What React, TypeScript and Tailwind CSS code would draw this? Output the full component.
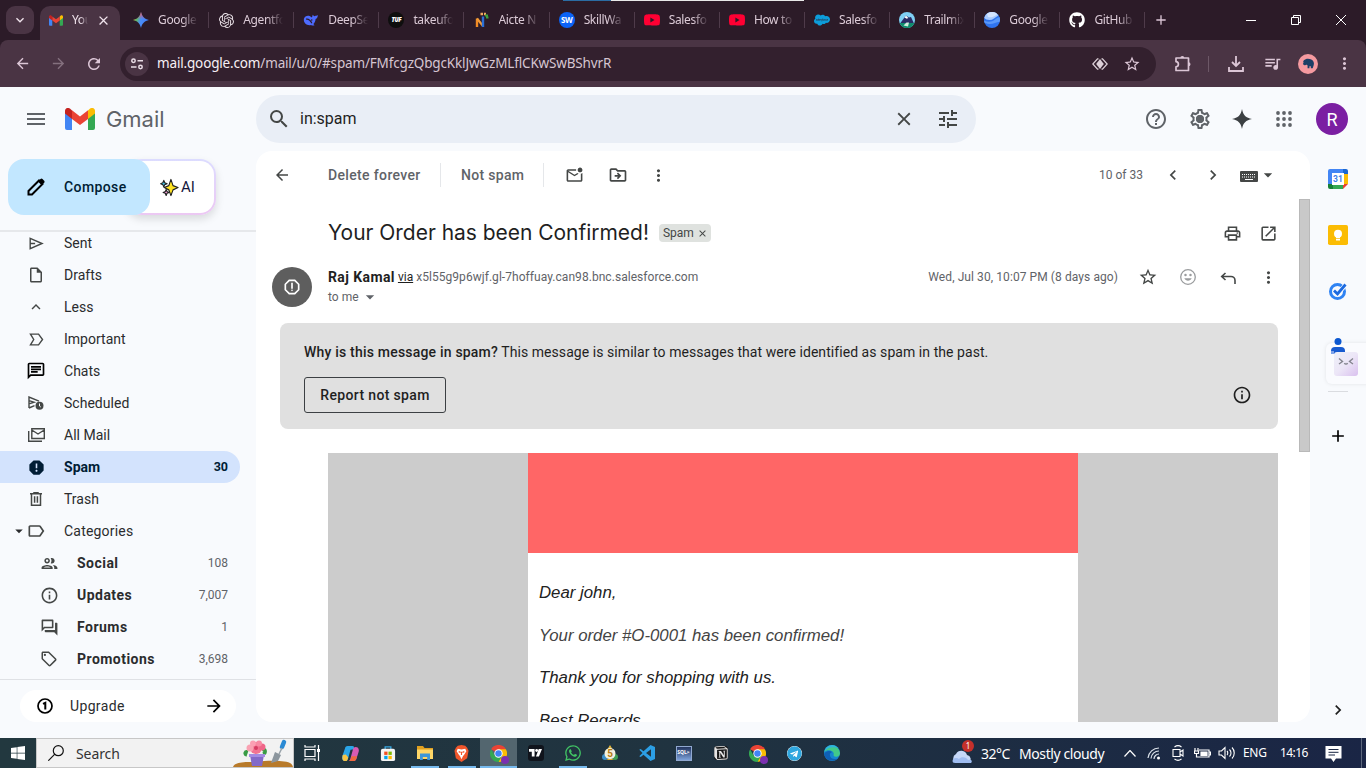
import type { ReactNode } from "react";
import {
  MdSearch, MdClose, MdTune, MdHelpOutline, MdApps, MdArrowBack, MdArrowForward, MdRefresh,
  MdOutlineMarkEmailUnread, MdOutlineDriveFileMove, MdMoreVert, MdOutlinePrint, MdOpenInNew, MdStarBorder,
  MdArrowDropDown, MdOutlineReport, MdReport, MdLabelOutline,
  MdOutlineInsertDriveFile, MdOutlinePeople, MdInfoOutline, MdOutlineForum, MdOutlineChat, MdOutlineSell,
  MdKeyboardArrowDown, MdKeyboardArrowUp, MdChevronLeft, MdChevronRight, MdAdd, MdOutlineSettings,
  MdOutlineQueueMusic,
} from "react-icons/md";
import { FaGithub, FaSalesforce, FaWhatsapp, FaWindows, FaTelegram } from "react-icons/fa";
import { SiOpenai, SiYoutube, SiNotion } from "react-icons/si";

const ui = "font-['Noto_Sans',sans-serif]";

function GmailLogo({ className }: { className: string }) {
  return (
    <svg viewBox="0 0 30 22" className={className}>
      <path d="M0 3.5v16.500a2 2 0 0 0 2 2h5V9z" fill="#4285f4" />
      <path d="M30 3.500v16.500a2 2 0 0 1-2 2h-5V9z" fill="#34a853" />
      <path d="M23 2.500V11l7-5.500V3c0-2.800-3-4-5.200-2.200z" fill="#fbbc04" />
      <path d="M7 11V2.200L15 8.500l8-6.300V11l-8 6z" fill="#ea4335" />
      <path d="M0 3v2.500L7 11V2.500L5.200.8C3-1 0 .200 0 3z" fill="#c5221f" />
    </svg>
  );
}

function Gemini() {
  return (
    <svg viewBox="0 0 16 16" className="size-4">
      <defs>
        <linearGradient id="gem" x1="0" y1="0.300" x2="1" y2="0.600">
          <stop offset="0" stopColor="#f6c945" />
          <stop offset="0.250" stopColor="#5fb96a" />
          <stop offset="0.500" stopColor="#4a8df8" />
          <stop offset="1" stopColor="#3f7df5" />
        </linearGradient>
        <linearGradient id="gem2" x1="0" y1="0" x2="0" y2="1">
          <stop offset="0" stopColor="#f0506a" />
          <stop offset="0.450" stopColor="#f0506a" stopOpacity="0" />
        </linearGradient>
      </defs>
      <path d="M8 0C9 4.500 11.500 7 16 8 11.500 9 9 11.500 8 16 7 11.500 4.500 9 0 8 4.500 7 7 4.500 8 0z" fill="url(#gem)" />
      <path d="M8 0C9 4.500 11.500 7 16 8 11.500 9 9 11.500 8 16 7 11.500 4.500 9 0 8 4.500 7 7 4.500 8 0z" fill="url(#gem2)" />
    </svg>
  );
}

function Whale() {
  return (
    <svg viewBox="0 0 18 16" className="h-[15px] w-[17px]">
      <path d="M1 6c1-3 4-4 6.500-3 1 .4 1.500 1 2.500 1.600.6-.8.4-2 1-3 .7 1 1.200 1.500 2 1.600.9-.2 2-.4 3.500-1.400.3 2.400-.6 3.900-2.300 4.500-.3 2.700-1.200 4.500-2.600 5.700l1.400 1.400c-1.700.4-3 .2-4-.4C5 14 .3 11.500 1 6z" fill="#4d6bfe" />
      <path d="M3.500 6.500c2.500-.6 5 1.500 6.500 4.700" stroke="#2c1b28" strokeWidth="1.300" fill="none" />
      <circle cx="9.800" cy="7.500" r="0.900" fill="#2c1b28" />
    </svg>
  );
}

function Aicte() {
  return (
    <svg viewBox="0 0 16 16" className="size-4">
      <path d="M3 15V6.500" stroke="#f08a24" strokeWidth="2.400" />
      <path d="M3 6.500 9 14" stroke="#f29b38" strokeWidth="2.200" fill="none" />
      <path d="M9 4.500V15" stroke="#2b6fd6" strokeWidth="2.400" />
      <path d="M6.500 2h2.500M10 2h2" stroke="#f0a860" strokeWidth="2.600" />
      <path d="M11 3.500h3M12 5.500h2.500" stroke="#3da13d" strokeWidth="1.800" />
    </svg>
  );
}

function Trail() {
  return (
    <svg viewBox="0 0 16 16" className="size-4">
      <circle cx="8" cy="8" r="8" fill="#7fd0f5" />
      <path d="M1 11.500 7 3.500l3 2L12 5l3 6.500z" fill="#2a2c66" />
      <path d="M5.500 5.500 7 3.500l2.300 2.500-1.500.8z" fill="#fff" />
      <path d="M.6 11h14.800A8 8 0 0 1 .6 11z" fill="#0f8c6d" />
      <path d="M4.500 13.500l3-3h2.500l-1 4z" fill="#cfeedd" />
    </svg>
  );
}

function Earth() {
  return (
    <svg viewBox="0 0 16 16" className="size-4">
      <circle cx="8" cy="8" r="8" fill="#2f74ee" />
      <path d="M.2 6A8 8 0 0 1 14.500 3.400C11 5.500 9 8 5.500 8 3 8 1.500 7 .2 6z" fill="#a9cbff" />
      <path d="M3 1.800A8 8 0 0 1 13.500 2.200C10 4.500 7 6 4 5z" fill="#d4e5ff" />
      <path d="M0 8.500c4 2 8 1.500 11-1 2-1.500 3-2 4.500-2.500.7 2 .6 3.500.2 4.800C12 10 9 12.500 5 12 3 11.700 1 11 .4 10.500z" fill="#5b99f8" />
    </svg>
  );
}

const tabs: { label: string; icon: ReactNode }[] = [
  { label: "Google", icon: <Gemini /> },
  { label: "Agentfo", icon: <SiOpenai className="size-[15px] text-[#e8e0e6]" /> },
  { label: "DeepSe", icon: <Whale /> },
  {
    label: "takeufo",
    icon: <span className="flex size-4 items-center justify-center rounded-full bg-[#0e0e0e] text-[6px] font-black italic text-white">TUF</span>,
  },
  { label: "Aicte N", icon: <Aicte /> },
  {
    label: "SkillWa",
    icon: <span className="flex size-4 items-center justify-center rounded-full bg-[#0b63f6] text-[8px] font-bold text-white">SW</span>,
  },
  { label: "Salesfo", icon: <SiYoutube className="size-4 text-[#ff0033]" /> },
  { label: "How to", icon: <SiYoutube className="size-4 text-[#ff0033]" /> },
  { label: "Salesfo", icon: <FaSalesforce className="size-4 text-[#0d9dda]" /> },
  { label: "Trailmix", icon: <Trail /> },
  { label: "Google", icon: <Earth /> },
  { label: "GitHub", icon: <FaGithub className="size-4 text-white" /> },
];

function TabStrip() {
  return (
    <div className={`relative flex h-10 shrink-0 bg-[#2c1b28] text-[12px] tracking-[-0.350px] text-[#dccbd7] ${ui}`}>
      <div className="absolute top-0 left-[563px] h-px w-[48px] bg-[#2b6ca3]" />
      <div className="absolute top-0 left-[611px] h-px w-[193px] bg-[#e9e9e9]" />
      <div className="mt-1.5 ml-1.5 flex size-7 items-center justify-center rounded-[9px] bg-[#4a3444] text-[#f0e3ec]">
        <MdKeyboardArrowDown className="size-4" />
      </div>
      <div className="mt-1.5 ml-1.5 flex w-20 items-center rounded-t-[10px] bg-[#4a3444] pb-1.5 pl-[9px]">
        <GmailLogo className="h-[11px] w-[14px]" />
        <span className="ml-[9px] w-4 overflow-hidden whitespace-nowrap text-[#f0e3ec] [mask-image:linear-gradient(90deg,#000_50%,transparent)]">You</span>
        <MdClose className="ml-2 size-[15px] text-[#f0e3ec]" />
      </div>
      <div className="flex pl-1">
        {tabs.map((t, i) => (
          <div key={i} className="flex h-10 w-[85.140px] items-center pl-[9px]">
            <span className="flex w-4 shrink-0 justify-center">{t.icon}</span>
            <span className="ml-[9px] w-[40px] shrink-0 overflow-hidden whitespace-nowrap [mask-image:linear-gradient(90deg,#000_60%,transparent)]">{t.label}</span>
            <span className="ml-[10px] h-4 w-px bg-[#4f3b4a]" />
          </div>
        ))}
      </div>
      <MdAdd className="mt-3 ml-[7px] size-4 text-[#dcc6d6]" />
      <div className="flex-1" />
      <div className="flex w-[138px] items-center justify-around pr-0.5 text-white">
        <svg viewBox="0 0 10 10" className="size-[10px]"><path d="M0 5.500h10" stroke="currentColor" /></svg>
        <svg viewBox="0 0 10 10" className="size-[10px]" fill="none" stroke="currentColor"><path d="M.5 2.500h7v7h-7zM2.500 2.500v-2h7v7h-2" /></svg>
        <svg viewBox="0 0 10 10" className="size-[10px]" stroke="currentColor"><path d="M0 0l10 10M10 0L0 10" /></svg>
      </div>
    </div>
  );
}

function Slot({ w, children }: { w: string; children: ReactNode }) {
  return <div className={`flex shrink-0 items-center justify-center ${w}`}>{children}</div>;
}

function AddressBar() {
  return (
    <div className="flex h-[47px] shrink-0 items-center rounded-t-lg bg-[#4a3444] text-[#dcc6d6]">
      <div className="w-1" />
      <Slot w="w-9"><MdArrowBack className="size-[17px]" /></Slot>
      <Slot w="w-9"><MdArrowForward className="size-[17px] text-[#84707e]" /></Slot>
      <Slot w="w-9"><MdRefresh className="size-[18px]" /></Slot>
      <div className="ml-2 flex h-[34px] w-[1036px] items-center rounded-full bg-[#33202e] pl-[5px]">
        <span className="flex size-6 items-center justify-center rounded-full bg-[#4a3444]">
          <svg viewBox="0 0 14 14" className="size-[14px]" fill="none" stroke="#eadde6" strokeWidth="1.500">
            <circle cx="3.500" cy="3.800" r="1.700" /><path d="M7.500 3.800H13M1 10h5.500" /><circle cx="10.500" cy="10" r="1.700" />
          </svg>
        </span>
        <span className={`ml-2 text-[13.500px] tracking-[-0.160px] whitespace-nowrap text-[#d6c5d1] ${ui}`}>
          <span className="text-[#f7eff5]">mail.google.com</span>/mail/u/0/#spam/FMfcgzQbgcKklJwGzMLflCKwSwBShvrR
        </span>
        <div className="flex-1" />
        <Slot w="w-8">
          <svg viewBox="0 0 16 16" className="size-4" fill="none" stroke="#dcd0d8" strokeWidth="1.300">
            <path d="M6.500 2.800h-1L.8 8l4.700 5.200h1M9.500 2.800h1L15.200 8l-4.700 5.200h-1" /><path d="M8 3 11.800 8 8 13 4.200 8z" fill="#dcd0d8" stroke="none" />
          </svg>
        </Slot>
        <Slot w="w-8"><MdStarBorder className="size-[18px]" /></Slot>
        <div className="w-2" />
      </div>
      <div className="w-[9px]" />
      <Slot w="w-9">
        <svg viewBox="0 0 18 18" className="size-[18px]" fill="none" stroke="currentColor" strokeWidth="1.700">
          <path d="M2 3h12.500v12.500H2v-3.700c3.200-.3 3.200-4.800 0-5.100z" strokeLinejoin="round" />
          <path d="M6.300 3a2 2 0 0 1 4 0zM14.500 7.200a2 2 0 0 1 0 4z" fill="currentColor" stroke="none" />
        </svg>
      </Slot>
      <div className="ml-[7px] h-4 w-px bg-[#6d5867]" />
      <div className="w-[9px]" />
      <Slot w="w-9">
        <svg viewBox="0 0 16 16" className="size-4" fill="none" stroke="currentColor" strokeWidth="1.800"><path d="M8 0v9.500M4 6l4 4 4-4M1 11v4h14v-4" /></svg>
      </Slot>
      <Slot w="w-9"><MdOutlineQueueMusic className="size-[19px]" /></Slot>
      <Slot w="w-9">
        <span className="flex size-5 items-center justify-center rounded-full bg-[#f59aa0]">
          <svg viewBox="0 0 14 12" className="w-[13px]"><path d="M2 2.500C4 0 8 .5 10 1.500c2.500 1 3.500 4 2.500 6.500l-1 3H9.500V9H8v2H6V8C5.500 7 5 7 4 7.500 2 8.500 1 7 1 5.500c1.500.5 1.500-.5 0-1z" fill="#1d3f66" /></svg>
        </span>
      </Slot>
      <Slot w="w-9"><MdMoreVert className="size-[19px]" /></Slot>
    </div>
  );
}

function Header() {
  return (
    <div className="flex h-16 shrink-0 items-center text-[#444746]">
      <Slot w="w-[72px]">
        <svg viewBox="0 0 18 12" className="h-3 w-[18px]"><path d="M0 1h18M0 6h18M0 11h18" stroke="#5f6368" strokeWidth="1.800" /></svg>
      </Slot>
      <GmailLogo className="-ml-[7px] h-[22px] w-[30px]" />
      <span className="ml-[11px] w-[150px] font-['Inter',sans-serif] text-[22px] leading-6 tracking-[-0.050px] text-[#5f6368]">Gmail</span>
      <div className="-mt-[1px] flex h-12 w-[720px] items-center rounded-full bg-[#e9eef6]">
        <Slot w="ml-[3px] mr-px w-10"><MdSearch className="size-6" /></Slot>
        <span className="flex-1 text-[16px] text-[#1f1f1f]">in:spam</span>
        <Slot w="w-11"><MdClose className="size-[22px]" /></Slot>
        <Slot w="w-11"><MdTune className="size-6" /></Slot>
        <div className="w-1.5" />
      </div>
      <div className="w-[158px]" />
      <Slot w="w-11"><MdHelpOutline className="size-6 text-[#5f6368]" /></Slot>
      <Slot w="w-11"><span className="relative flex"><MdOutlineSettings className="size-6 text-[#5f6368]" /><span className="absolute top-[8px] left-[8px] size-2 rounded-full bg-[#5f6368]" /></span></Slot>
      <Slot w="w-10">
        <svg viewBox="0 0 20 20" className="size-5"><path d="M10 0c1 6 4 9 10 10-6 1-9 4-10 10-1-6-4-9-10-10 6-1 9-4 10-10z" fill="#3c4043" /></svg>
      </Slot>
      <Slot w="w-11">
        <svg viewBox="0 0 16 16" className="size-4" fill="#5f6368">
          {[2, 8, 14].map((y) => [2, 8, 14].map((x) => <circle key={`${x}-${y}`} cx={x} cy={y} r="1.900" />))}
        </svg>
      </Slot>
      <Slot w="ml-[10px] w-8"><span className="flex size-8 items-center justify-center rounded-full bg-[#7b1fa2] text-[18px] text-white">R</span></Slot>
    </div>
  );
}

function Sent() {
  return (
    <svg viewBox="0 0 16 14" className="h-[13px] w-[15px]" fill="none" stroke="currentColor" strokeWidth="1.500">
      <path d="M1.200 1.500 14 7 1.200 12.500zM1.500 7h5" />
    </svg>
  );
}

function Important() {
  return (
    <svg viewBox="0 0 16 14" className="h-[13px] w-[15px]" fill="none" stroke="currentColor" strokeWidth="1.500">
      <path d="M1.500 1.200h8.700L14.500 7l-4.300 5.800H1.500L5 7z" />
    </svg>
  );
}

function Trash() {
  return (
    <svg viewBox="0 0 12 14" className="h-[14px] w-3" fill="none" stroke="currentColor" strokeWidth="1.500">
      <path d="M0 1.700h12M4 1V.4h4V1M1.500 2v11.200h9V2M4.600 4.200v6.600M7.400 4.200v6.600" />
    </svg>
  );
}

function AllMail() {
  return (
    <svg viewBox="0 0 17 14" className="h-[14px] w-[17px]" fill="none" stroke="currentColor" strokeWidth="1.400">
      <path d="M3.800.7h12.500v9.800H3.800zM3.800 2l6.200 4 6.200-4M.7 3v10.300h13.300" />
    </svg>
  );
}

function Scheduled() {
  return (
    <svg viewBox="0 0 16 14" className="h-[14px] w-4">
      <path d="M1 12V1l10 4.200M1 12l5.500-2.300M1 4.700l5 1.500-5 1.600" stroke="currentColor" strokeWidth="1.400" fill="none" />
      <circle cx="11.500" cy="9.800" r="4" fill="currentColor" /><path d="M11.500 7.500v2.500l1.300 1" stroke="#f8fafd" fill="none" />
    </svg>
  );
}

const folders: { name: string; icon: ReactNode }[] = [
  { name: "Sent", icon: <Sent /> },
  { name: "Drafts", icon: <MdOutlineInsertDriveFile className="size-[18px]" /> },
  { name: "Less", icon: <MdKeyboardArrowUp className="size-[18px]" /> },
  { name: "Important", icon: <Important /> },
  { name: "Chats", icon: <MdOutlineChat className="size-5 text-black" /> },
  { name: "Scheduled", icon: <Scheduled /> },
  { name: "All Mail", icon: <AllMail /> },
  { name: "Spam", icon: <MdReport className="size-[19px] text-[#001d35]" /> },
  { name: "Trash", icon: <Trash /> },
];

const categories: { name: string; count: string; icon: ReactNode }[] = [
  { name: "Social", count: "108", icon: <MdOutlinePeople className="size-[19px]" /> },
  { name: "Updates", count: "7,007", icon: <MdInfoOutline className="size-[19px]" /> },
  { name: "Forums", count: "1", icon: <MdOutlineForum className="size-[19px]" /> },
  { name: "Promotions", count: "3,698", icon: <MdOutlineSell className="size-[18px]" /> },
];

function Sparkles() {
  return (
    <svg viewBox="0 0 20 20" className="size-[19px]" stroke="#222" strokeWidth="1.200" strokeLinejoin="round">
      <path d="M11.500 1.500 13.700 8l5.300 2-5.300 2.500-2.200 6-2.200-6L4.500 10l4.800-2z" fill="#ffe322" />
      <path d="M4 2.500 5 5l2.500 1L5 7 4 9.500 3 7 .7 6 3 5z" fill="#3fc5ee" />
      <path d="M6.500 12l.9 2.300 2.300.9-2.300.9-.9 2.300-.9-2.300-2.300-.9 2.300-.9z" fill="#f59bd8" />
    </svg>
  );
}

function Sidebar() {
  return (
    <div className="flex w-64 shrink-0 flex-col text-[14px] text-[#2b2c2e]">
      <div className="flex h-[79px] shrink-0 pt-2 pl-2">
        <div className="z-10 flex h-14 w-[142px] items-center rounded-2xl bg-[#c2e7ff] text-[#001d35]">
          <Slot w="w-14">
            <svg viewBox="0 0 20 20" className="size-5"><path d="M2.500 14 13 3.500l3.500 3.500L6 17.500H2.500z" fill="none" stroke="#000" strokeWidth="2" /><path d="m12 4.500 2.500-2.500a1.500 1.500 0 0 1 2 0l1.700 1.700a1.500 1.500 0 0 1 0 2L15.500 8z" fill="#000" /></svg>
          </Slot>
          <span className="font-medium tracking-[0.400px]">Compose</span>
        </div>
        <div className="-ml-6 h-14 w-[90px] rounded-2xl bg-linear-to-b from-[#dcdcff] to-[#ecc8f3] p-0.5 shadow-[0_4px_8px_rgba(0,0,0,0.130)]">
          <div className="flex h-full items-center rounded-[14px] bg-white pl-[32px]">
            <Sparkles />
            <span className="ml-0.5 text-[15px] text-[#14163c]">AI</span>
          </div>
        </div>
      </div>
      <div className="h-[2px] shrink-0 bg-[#e6e8eb]" />
      <div className="h-[447px] shrink-0 overflow-hidden">
        <div className="-mt-[5px]">
          {folders.map((f) => (
            <div key={f.name} className={`flex h-8 w-60 items-center rounded-r-full ${f.name === "Spam" ? "bg-[#d3e3fd] font-bold text-[#001d35]" : ""}`}>
              <Slot w="ml-5 w-8"><span className="text-[#444746]">{f.icon}</span></Slot>
              <span className="ml-3 flex-1 tracking-[0.020px]">{f.name}</span>
              {f.name === "Spam" && <span className="mr-3 text-[12.500px]">30</span>}
            </div>
          ))}
          <div className="flex h-8 items-center">
            <MdArrowDropDown className="ml-[10px] size-[18px]" />
            <MdLabelOutline className="-ml-[2px] size-5 text-[#444746]" />
            <span className="ml-[18px] tracking-[0.200px]">Categories</span>
          </div>
          {categories.map((c) => (
            <div key={c.name} className="flex h-8 w-[228px] items-center">
              <Slot w="ml-[33px] w-8"><span className="text-[#444746]">{c.icon}</span></Slot>
              <span className="ml-3 flex-1 font-bold tracking-[0.470px]">{c.name}</span>
              <span className="text-[12px] text-[#5f6368]">{c.count}</span>
            </div>
          ))}
        </div>
      </div>
      <div className="h-px shrink-0 bg-[#dfe1e5]" />
      <div className="mt-[10px] ml-5 flex h-8 w-[216px] items-center rounded-full bg-white">
        <svg viewBox="0 0 16 16" className="ml-[17px] size-4" fill="none" stroke="#000"><circle cx="8" cy="8" r="7" strokeWidth="1.700" /><path d="M6 5.800 8.300 4.800V11.500" strokeWidth="2" /></svg>
        <span className="ml-[17px] flex-1 tracking-[0.350px]">Upgrade</span>
        <MdArrowForward className="mr-[12px] size-5 text-black" />
      </div>
    </div>
  );
}

function KeyboardIcon() {
  return (
    <svg viewBox="0 0 18 11" className="mt-0.5 h-[11px] w-[18px]">
      <rect width="18" height="11" rx="1" fill="#444746" />
      <path d="M2 3.500h14M2 6h14" stroke="#fff" strokeWidth="1" strokeDasharray="1 1" />
      <path d="M5 8.500h8" stroke="#fff" />
    </svg>
  );
}

function Mail() {
  return (
    <div className="relative flex h-[571px] w-[1054px] shrink-0 flex-col overflow-hidden rounded-2xl bg-white text-[14px] text-[#1f1f1f]">
      <div className="absolute top-12 right-0 h-[253px] w-[11px] border border-[#b9b9b9] bg-[#c9c9c9]" />
      <div className="flex h-12 shrink-0 items-center text-[#444746]">
        <Slot w="w-[52px]"><MdArrowBack className="size-[18px]" /></Slot>
        <div className="w-5" />
        <span className="w-[112px] font-medium tracking-[0.350px] text-[#5f6368]">Delete forever</span>
        <div className="h-6 w-px bg-[#e5e7ea]" />
        <span className="w-[102px] pl-5 font-medium tracking-[0.300px] text-[#5f6368]">Not spam</span>
        <div className="h-6 w-px bg-[#e5e7ea]" />
        <Slot w="ml-[8px] w-11"><MdOutlineMarkEmailUnread className="size-[19px]" /></Slot>
        <Slot w="w-11"><MdOutlineDriveFileMove className="size-[20px]" /></Slot>
        <Slot w="w-9"><MdMoreVert className="size-[19px]" /></Slot>
        <div className="flex-1" />
        <span className="text-[12px] text-[#5f6368]">10 of 33</span>
        <Slot w="ml-[10px] w-10"><MdChevronLeft className="size-5" /></Slot>
        <Slot w="w-10"><MdChevronRight className="size-5" /></Slot>
        <div className="ml-[7px]"><KeyboardIcon /></div>
        <MdArrowDropDown className="size-5" />
        <div className="w-8" />
      </div>
      <div className="flex h-[68px] shrink-0 items-center pl-[72px] text-[#444746]">
        <span className="font-['Inter',sans-serif] text-[21px] tracking-[-0.030px] whitespace-nowrap text-[#1f1f1f]">Your Order has been Confirmed!</span>
        <span className="ml-[10px] flex h-[18px] w-[52px] items-center rounded bg-[#dfe2df] pl-1 text-[12px]">Spam<MdClose className="ml-[3px] size-[11px]" /></span>
        <div className="flex-1" />
        <Slot w="w-9"><MdOutlinePrint className="size-[19px]" /></Slot>
        <Slot w="w-9"><MdOpenInNew className="size-[19px]" /></Slot>
        <div className="w-6" />
      </div>
      <div className="flex h-14 shrink-0 pl-4">
        <span className="flex size-10 items-center justify-center rounded-full bg-[#5e5e5e] text-white"><MdOutlineReport className="size-5" /></span>
        <div className="ml-4 flex-1">
          <div className="flex h-5 items-center">
            <span className="font-bold tracking-[0.400px]">Raj Kamal</span>
            <span className="ml-[3px] text-[12px] underline">via</span>
            <span className="ml-[3px] text-[12px] tracking-[0.050px] text-[#5f6368]">x5l55g9p6wjf.gl-7hoffuay.can98.bnc.salesforce.com</span>
          </div>
          <div className="flex h-5 items-center text-[12px] text-[#5f6368]">to me<MdArrowDropDown className="ml-[1px] size-5" /></div>
        </div>
        <div className="flex h-5 items-center text-[#444746]">
          <span className="mr-3 text-[12px] tracking-[0.080px] text-[#5f6368]">Wed, Jul 30, 10:07 PM (8 days ago)</span>
          <Slot w="w-9"><MdStarBorder className="size-5" /></Slot>
          <div className="w-1" />
          <Slot w="w-9">
            <svg viewBox="0 0 16 16" className="size-4" fill="none" stroke="#9a9c9e" strokeWidth="1.300"><circle cx="8" cy="8" r="7.300" /><path d="M5.500 10h5c-1 1.500-4 1.500-5 0z" fill="#9a9c9e" /><circle cx="5.500" cy="6" r=".6" fill="#9a9c9e" /><circle cx="10.500" cy="6" r=".6" fill="#9a9c9e" /></svg>
          </Slot>
          <div className="w-1" />
          <Slot w="w-9">
            <svg viewBox="0 0 16 12" className="mt-0.5 h-3 w-4" fill="none" stroke="currentColor" strokeWidth="1.600"><path d="M5.500 1 1.700 4.500 5.500 8M2 4.500h9a4 4 0 0 1 4 4V12" /></svg>
          </Slot>
          <div className="w-1" />
          <Slot w="w-9"><MdMoreVert className="size-[19px]" /></Slot>
          <div className="w-6" />
        </div>
      </div>
      <div className="ml-6 flex h-[106px] w-[998px] shrink-0 flex-col rounded-lg bg-[#e0e0e0] pt-5 pl-6">
        <div className="h-[18px] text-[14px] leading-[18px] tracking-[0.060px]"><span className="font-medium tracking-[0.200px]">Why is this message in spam?</span> This message is similar to messages that were identified as spam in the past.</div>
        <div className="mt-4 flex items-center">
          <span className="flex h-9 w-[142px] items-center justify-center rounded-[3px] border border-[#3c4043] font-medium tracking-[0.350px]">Report not spam</span>
          <MdInfoOutline className="ml-auto mr-[26px] size-5" />
        </div>
      </div>
      <div className="mt-6 ml-[72px] flex h-[269px] w-[950px] shrink-0 justify-center bg-[#cccccc]">
        <div className="w-[550px] overflow-hidden bg-white">
          <div className="h-[100px] bg-[#ff6666]" />
          <div className="pt-[29px] pl-[11px] font-['Liberation_Sans',sans-serif] text-[16.800px] leading-[21px] whitespace-nowrap italic text-[#222]">
            <p>Dear john,</p>
            <p className="mt-[22px] text-[#444]">Your order #O-0001 has been confirmed!</p>
            <p className="mt-[21px]">Thank you for shopping with us.</p>
            <p className="mt-[22px]">Best Regards,</p>
          </div>
        </div>
      </div>
    </div>
  );
}

function SidePanel() {
  return (
    <div className="flex flex-1 flex-col items-center">
      <svg viewBox="0 0 20 20" className="mt-[18px] size-5">
        <path d="M0 2a2 2 0 0 1 2-2h13v5H5v10H0z" fill="#4285f4" /><path d="M15 0h3a2 2 0 0 1 2 2v3h-5z" fill="#1967d2" /><path d="M15 5h5v10h-5z" fill="#fbbc04" /><path d="M5 15h10v5H5z" fill="#34a853" /><path d="M0 15h5v5H2a2 2 0 0 1-2-2z" fill="#188038" /><path d="M15 15h5l-5 5z" fill="#ea4335" /><path d="M4 4h12v12H4z" fill="#fff" />
        <text x="10" y="13.200" textAnchor="middle" fontSize="8.500" fontWeight="700" fill="#3f7fe8" fontFamily="Roboto">31</text>
      </svg>
      <svg viewBox="0 0 20 20" className="mt-9 size-5">
        <rect width="20" height="20" rx="1.800" fill="#fbbc04" /><circle cx="10" cy="8.800" r="4" fill="#fff" /><path d="M8 12h4v3.500H8z" fill="#fff" /><path d="M8 13.500h4" stroke="#fbbc04" strokeWidth=".7" />
      </svg>
      <svg viewBox="0 0 20 20" className="mt-9 size-5" fill="none">
        <circle cx="9.500" cy="10.500" r="7" stroke="#2f83f3" strokeWidth="3" /><path d="m6 9.500 3.500 3.500L17 4.500" stroke="#f8fafd" strokeWidth="4.500" /><path d="m6 9.500 3.500 3.500L17.500 3.500" stroke="#1c6ae0" strokeWidth="2.800" />
      </svg>
      <div className="relative mt-9 h-[54px] w-14">
        <div className="absolute top-[6px] left-4 h-[41px] w-11 rounded-l-md bg-[#fafbfe] shadow-[0_0_4px_rgba(0,0,0,0.090)]" />
        <svg viewBox="0 0 16 18" className="absolute top-0 left-5 h-[18px] w-4"><circle cx="8" cy="4.500" r="3.500" fill="#0b57d0" /><path d="M1 17v-3a4 4 0 0 1 4-4h6a4 4 0 0 1 4 4v3z" fill="#185bd0" /><path d="M1 17v-3h3v3z" fill="#7fa4ea" /></svg>
        <div className="absolute top-[15px] left-6 h-[24px] w-[24px] rounded-[3px] bg-linear-to-br from-[#eef0f8] via-[#ece6f7] to-[#d9c0ee]">
          <svg viewBox="0 0 24 24" className="size-6" fill="none" stroke="#85858f" strokeWidth="1.400"><path d="m5 6.500 3.500 3L5 12M19 6.500l-3.500 3L19 12M10.500 11c.5 1.500 2.500 1.500 3 0" /></svg>
        </div>
      </div>
      <div className="h-px w-5 bg-[#dadce0]" />
      <MdAdd className="mt-[34px] size-5 text-black" />
      <MdChevronRight className="mt-auto mb-[18px] size-5 text-[#1f1f1f]" />
    </div>
  );
}

function Chrome() {
  return (
    <span className="relative">
      <svg viewBox="0 0 20 20" className="size-[17px]">
        <path d="M10 10 1.300 5A10 10 0 0 1 18.700 5z" fill="#ea4335" /><path d="M10 10V5h8.700A10 10 0 0 1 10 20z" fill="#fbbc04" /><path d="M10 10l4.300 2.500L10 20A10 10 0 0 1 1.300 5L5.700 12.500z" fill="#34a853" /><circle cx="10" cy="10" r="4.900" fill="#fff" /><circle cx="10" cy="10" r="3.800" fill="#4285f4" />
      </svg>
      <span className="absolute -right-0.5 -bottom-0.5 size-2 rounded-full bg-[#7b2fb0]" />
    </span>
  );
}

const apps: { icon: ReactNode; running?: boolean; active?: boolean }[] = [
  {
    icon: (
      <svg viewBox="0 0 16 16" className="size-4" fill="none" stroke="#fff" strokeWidth="1.200"><path d="M1 0v2h10V0M1 4.500h10v7H1zM1 16v-2h10v2M14.500 0v16" /><path d="M13 5.500h3" strokeWidth="3" /></svg>
    ),
  },
  {
    icon: (
      <svg viewBox="0 0 18 16" className="h-[15px] w-[17px]">
        <path d="M6 0h5c2 0 2 2 2.500 3.500L9 4 6.500 13C6 15 5 16 3 16c-3 0-3.500-3-2.500-6L3 3C3.500 1 4 0 6 0z" fill="#2aa5e8" /><path d="M7 16h5c2 0 3-1 3.500-3L17.700 6C18.500 3 17 1 14.500 1c-1.500 0-2.500 1-3 3L9 13c-.5 2-1 3-2 3z" fill="#d85bb4" /><path d="M.8 9.500 4 9l2.500 3-.5 2C5.500 16 4.500 16 3 16 0 16 0 12 .8 9.500z" fill="#f6c445" /><path d="M12 11h4l-.8 2.500C14.500 15 14 16 12 16H7c1.500 0 2.500-2 3-5z" fill="#f0683e" />
      </svg>
    ),
  },
  {
    icon: (
      <svg viewBox="0 0 16 18" className="h-[17px] w-4"><path d="M5 5V2h6v3" stroke="#38a7e0" fill="none" strokeWidth="1.400" /><rect x=".5" y="4" width="15" height="13" rx="2" fill="#f4f4f4" /><path d="M4 7h3.500v3.500H4z" fill="#f25022" /><path d="M8.500 7H12v3.500H8.500z" fill="#7fba00" /><path d="M4 11.500h3.500V15H4z" fill="#00a4ef" /><path d="M8.500 11.500H12V15H8.500z" fill="#ffb900" /></svg>
    ),
  },
  {
    running: true,
    icon: (
      <svg viewBox="0 0 18 16" className="h-4 w-[18px]"><path d="M1 1h6l1.500 2H17v4H1z" fill="#e0a020" /><path d="M1 4.500h16V14H1z" fill="#ffd767" /><path d="M4 8.500h10V15h-2.800v-3H6.800v3H4z" fill="#3d97d8" /></svg>
    ),
  },
  {
    running: true,
    icon: (
      <svg viewBox="0 0 16 18" className="h-[17px] w-[15px]"><path d="m8 0 4 .8 2 2L15.500 6l-1.500 8-6 4-6-4L.5 6 2 2.800l2-2z" fill="#f1562b" /><path d="m4 4 4 .8L12 4l1.200 2.500L11 10l-1.500 2L8 15l-1.500-3L5 10 2.800 6.500z" fill="#fff" /><path d="M5 7l2 .8M11 7l-2 .8M8 7v3.500" stroke="#f1562b" strokeWidth="1.200" /></svg>
    ),
  },
  { running: true, active: true, icon: <Chrome /> },
  {
    icon: (
      <span className="flex size-4 items-center justify-center rounded-[3px] bg-[#10141c]"><svg viewBox="0 0 14 8" className="w-[13px]" fill="#fff"><path d="M0 0h6v8H3V3H0zM10.500 0H14l-3.300 8H7.500z" /><circle cx="8.200" cy="1.600" r="1.500" /></svg></span>
    ),
  },
  { running: true, icon: <FaWhatsapp className="size-[18px] text-[#41c464]" /> },
  {
    icon: (
      <svg viewBox="0 0 16 16" className="size-4"><path d="M8 0 11 5H5z" fill="#e6b93c" /><circle cx="3" cy="12" r="3" fill="#3d8fc9" /><circle cx="13" cy="12" r="3" fill="#3f9d55" /><path d="M4 15h8l-4-2z" fill="#e0b030" /><circle cx="8" cy="8.500" r="5.500" fill="#f4f1e0" /><text x="8" y="12" textAnchor="middle" fontSize="10" fontWeight="700" fill="#b57a12" fontFamily="Roboto">5</text></svg>
    ),
  },
  {
    icon: (
      <svg viewBox="0 0 16 16" className="size-4"><path d="M11.500 0 16 2v12l-4.500 2L4.500 9.800 1.700 12 .3 11.300 3.500 8 .3 4.700 1.700 4l2.800 2.200zM12 4.300 7 8l5 3.700z" fill="#2c9fe5" fillRule="evenodd" /></svg>
    ),
  },
  { icon: <span className="flex h-[15px] w-4 justify-center border border-[#91a8d0] bg-linear-to-b from-[#23355f] to-[#7ea2da] text-[5px] leading-[10px] font-bold text-white">SQL&gt;</span> },
  { icon: <SiNotion className="size-[14px] rounded-[3px] bg-[#161616] text-[#e5e5e5]" /> },
  { icon: <Chrome /> },
  { icon: <FaTelegram className="size-[15px] rounded-full bg-white text-[#2fa6de]" /> },
  {
    icon: (
      <svg viewBox="0 0 16 16" className="size-4"><circle cx="8" cy="8" r="8" fill="#1686d0" /><path d="M.2 7A8 8 0 0 1 16 8c0 3-2 3.700-4 3.700S9 10.500 9.800 9C10 6 4 3.500.2 7z" fill="#42c98a" /><path d="M.2 7A8 8 0 0 1 8 0c3 0 5 1.500 6.200 3C9 1.500 3 2.500.2 7z" fill="#2fb5dc" /><path d="M6 8.500C5 13 9 15 13.500 13.700 9 17.500 1 15.500.2 9 2 5.500 6 5.500 8 7z" fill="#0f5fb4" /></svg>
    ),
  },
];

function Taskbar() {
  return (
    <div className={`flex h-[30px] shrink-0 items-center bg-linear-to-r from-[#22383f] via-[#203340] to-[#1a2545] text-white ${ui}`}>
      <Slot w="w-9"><FaWindows className="size-4" /></Slot>
      <div className="flex h-[30px] w-[258px] items-center border border-[#c7c7c7] bg-[#f2f2f2] text-[#333]">
        <svg viewBox="0 0 16 16" className="ml-[11px] size-4" fill="none" stroke="#111" strokeWidth="1.200"><circle cx="10.300" cy="5.700" r="5" /><path d="m6.800 9.200-6.500 6.500" /></svg>
        <span className="ml-[12px] flex-1 text-[14px] tracking-[-0.100px]">Search</span>
        <svg viewBox="0 0 60 28" className="h-7 w-[60px]">
          <path d="M0 28c1-4 8-5 17-5 8 0 14-2 24-1 9 0 18 0 19 6z" fill="#b87a2a" />
          <path d="M15 13c-3-1-4 2-1 3M29 11c4-2 4 3 1 4" stroke="#399b45" strokeWidth="3.500" fill="none" />
          <circle cx="23" cy="9" r="6" fill="#f27392" /><circle cx="17" cy="9" r="3.500" fill="#f9a1b2" /><circle cx="29" cy="8" r="3.500" fill="#ef6688" /><circle cx="20" cy="4.500" r="3" fill="#fb9fb3" /><circle cx="26" cy="4.500" r="3" fill="#f78aa3" /><circle cx="23" cy="9" r="2" fill="#d63c62" />
          <path d="M17 16h14l-2 11H19z" fill="#8269c9" /><path d="M16 15h16v3H16z" fill="#a38be3" />
          <path d="m51 3-2 5" stroke="#2a8ad4" strokeWidth="4.500" strokeLinecap="round" /><path d="m49 9-3 6" stroke="#9aa4ab" strokeWidth="1.500" /><path d="m42 13 6 3-3 6-7 2z" fill="#8c969e" />
        </svg>
      </div>
      {apps.map((a, i) => (
        <div key={i} className={`relative flex h-[30px] w-[37px] items-center justify-center ${i === 1 ? "ml-[2px]" : ""} ${a.active ? "bg-[#53666f]" : ""} ${i === 0 ? "-ml-px" : ""}`}>
          {a.icon}
          {a.running && <span className={`absolute bottom-0 h-0.5 bg-[#76b9ed] ${a.active ? "w-full" : "w-7"}`} />}
        </div>
      ))}
      <div className="flex-1" />
      <div className="relative mr-[7px] h-6 w-6">
        <svg viewBox="0 0 24 16" className="mt-[7px] h-4 w-6"><path d="M6 15a5 5 0 0 1 0-9 6 6 0 0 1 11 1 4.500 4.500 0 0 1 2 8z" fill="#c6d8f8" /><path d="M3 14.500C1 10 7 9 9 11c2-3 8-2 9 1 3-1 5 1 3 3H5z" fill="#9fbcf0" /></svg>
        <span className="absolute -top-px right-0 flex size-3 items-center justify-center rounded-full bg-[#c4302b] text-[8px]">1</span>
      </div>
      <span className="w-[38px] text-[14px] tracking-[-0.500px]">32°C</span>
      <span className="w-[98px] text-[14px] tracking-[-0.400px] whitespace-nowrap">Mostly cloudy</span>
      <Slot w="w-[25px]"><svg viewBox="0 0 12 7" className="w-3" fill="none" stroke="#fff" strokeWidth="1.200"><path d="m.5 6.500 5.500-6 5.500 6" /></svg></Slot>
      <Slot w="w-6"><svg viewBox="0 0 14 14" className="size-[14px]" fill="none" stroke="#dce3ea" strokeWidth="1.200"><path d="M1 12A11 11 0 0 1 12 2M4 12.500A8 8 0 0 1 12 5M7 13a5 5 0 0 1 5-5" /><circle cx="11.500" cy="12" r="1.500" fill="#fff" stroke="none" /></svg></Slot>
      <Slot w="w-6"><svg viewBox="0 0 14 16" className="h-4 w-[14px]" fill="none" stroke="#fff" strokeWidth="1.100"><path d="M3.500 2c2-1.500 5-1.500 7 0M3.500 14c2 1.500 5 1.500 7 0M2 4.500h7v7H2zM9 7l3-2v6L9 9" /></svg></Slot>
      <Slot w="w-6"><svg viewBox="0 0 17 12" className="h-3 w-[17px]" fill="none" stroke="#fff" strokeWidth="1.200"><path d="M5 3h10v7H5M15 5h1.500v3H15M1 1v3M4 1v3M.5 4h4v2.500h-4zM2.500 6.500V10H5" /><path d="M7 5h6v3.500H7z" fill="#fff" /></svg></Slot>
      <Slot w="w-6"><svg viewBox="0 0 17 14" className="h-[14px] w-[17px]" fill="none" stroke="#fff" strokeWidth="1.100"><path d="M1 5h2.500L7 1.500v11L3.500 9H1zM9 5c1 1 1 3 0 4M11.500 3.500c2 2 2 5 0 7M14 1.500c3 3 3 8 0 11" /></svg></Slot>
      <span className="ml-[5px] w-[37px] text-[12px] tracking-[-0.300px]">ENG</span>
      <span className="w-[45px] text-[12px] tracking-[-0.600px]">14:16</span>
      <svg viewBox="0 0 17 17" className="mt-0.5 mr-[19px] size-[17px]"><path d="M.5 0h16v12.500H11L8.500 16 6 12.500H.5z" fill="#fff" /><path d="M3.500 3.500h10M3.500 6.300h10M3.500 9h6.500" stroke="#1b2744" /></svg>
      <div className="mr-1 h-[30px] w-px bg-[#5c677c]" />
    </div>
  );
}

export default function App() {
  return (
    <div className="flex h-[768px] w-[1366px] flex-col overflow-hidden bg-[#2c1b28] font-['Roboto',sans-serif]">
      <TabStrip />
      <AddressBar />
      <div className="flex h-[651px] shrink-0 flex-col bg-[#f8fafd]">
        <Header />
        <div className="flex h-[587px]">
          <Sidebar />
          <Mail />
          <SidePanel />
        </div>
      </div>
      <Taskbar />
    </div>
  );
}
